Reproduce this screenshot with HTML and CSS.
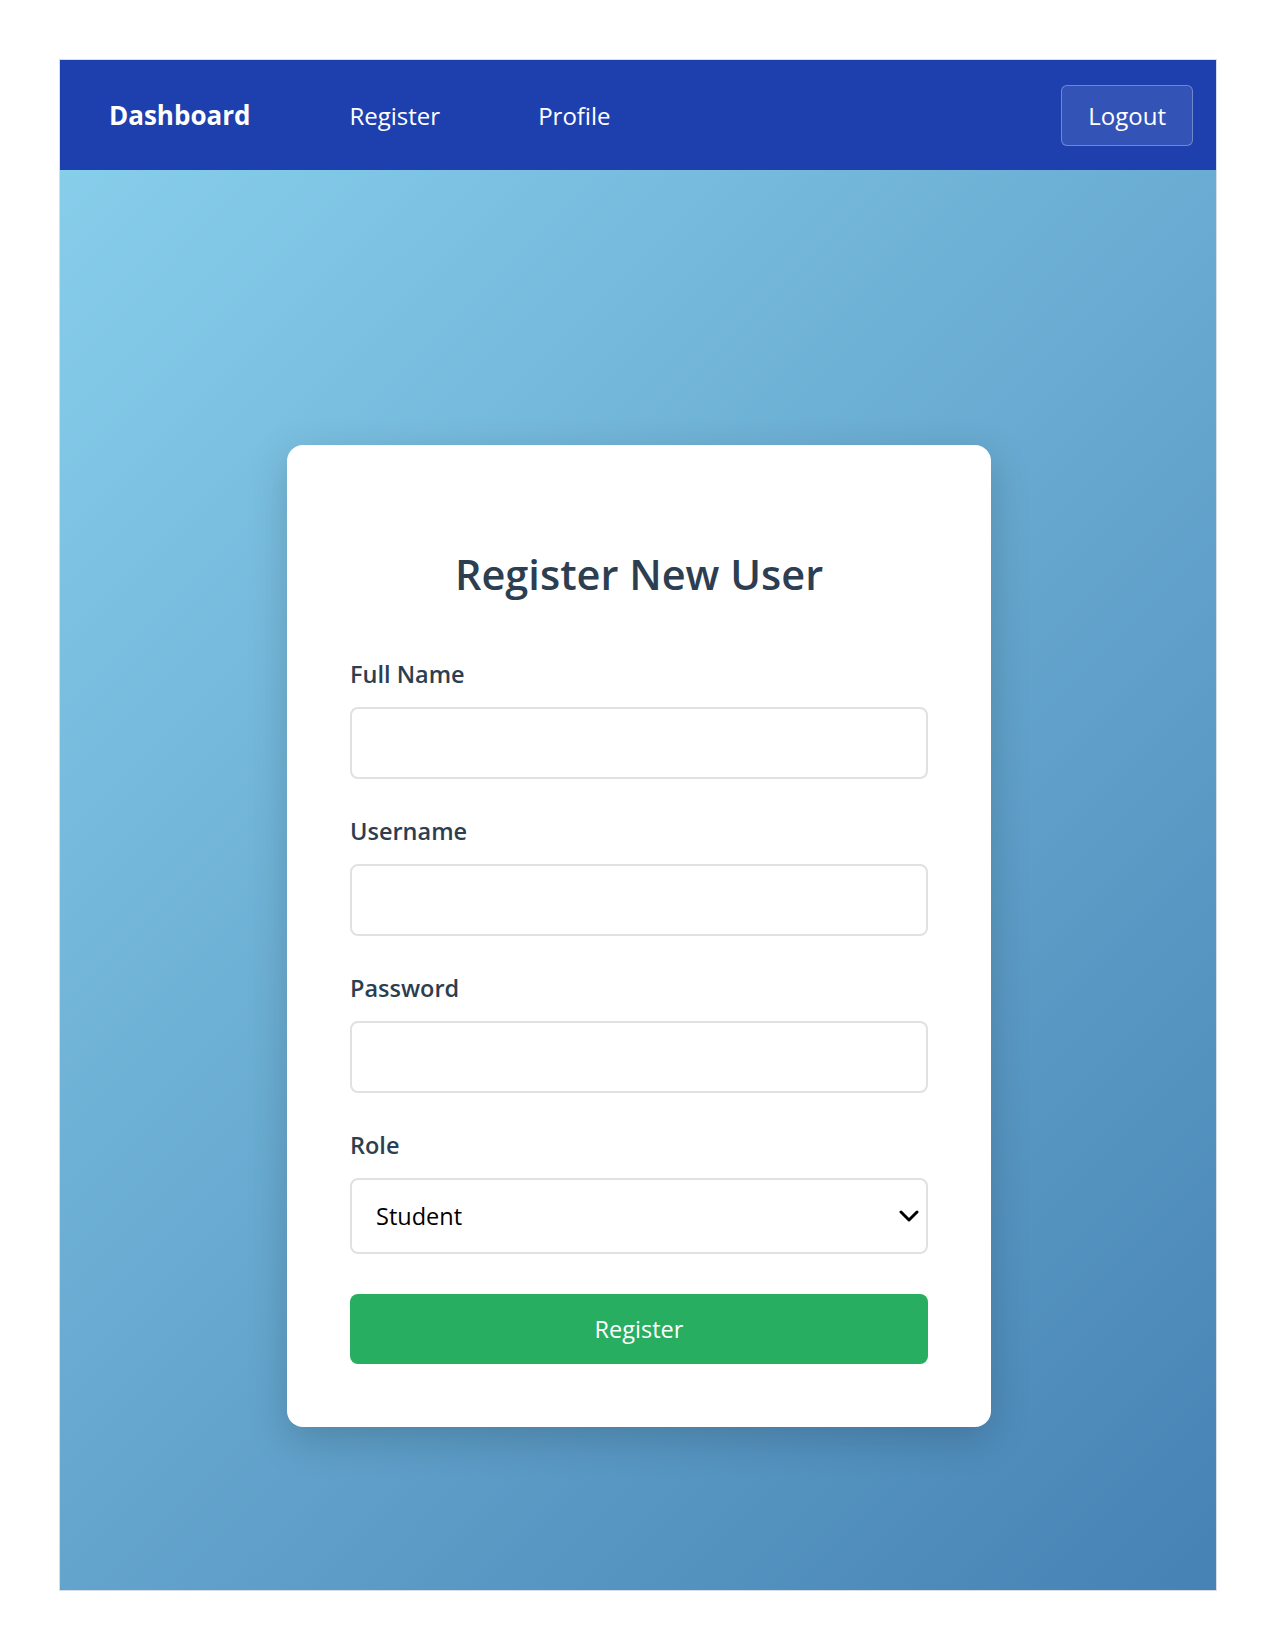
FILE: index.html
```html
<!DOCTYPE html>
<html lang="en">
<head>
<meta charset="utf-8">
<title>Register New User</title>
<link rel="stylesheet" href="styles.css">
</head>
<body>
<div class="frame">
  <nav class="navbar">
    <a class="brand" href="#">Dashboard</a>
    <div class="links">
      <a class="link" href="#">Register</a>
      <a class="link" href="#">Profile</a>
    </div>
    <button class="logout" type="button">Logout</button>
  </nav>
  <main class="main">
    <div class="card">
      <h2 class="title">Register New User</h2>
      <form class="form">
        <div class="group">
          <label class="label" for="fullname">Full Name</label>
          <input class="input" id="fullname" type="text">
        </div>
        <div class="group">
          <label class="label" for="username">Username</label>
          <input class="input" id="username" type="text">
        </div>
        <div class="group">
          <label class="label" for="password">Password</label>
          <input class="input" id="password" type="password">
        </div>
        <div class="group">
          <label class="label" for="role">Role</label>
          <div class="select-wrap">
            <select class="select" id="role">
              <option>Student</option>
              <option>Teacher</option>
              <option>Admin</option>
            </select>
            <svg class="chevron" width="20" height="12" viewBox="0 0 20 12" aria-hidden="true"><path d="M2 2 L10 10 L18 2" fill="none" stroke="#000" stroke-width="3" stroke-linecap="round" stroke-linejoin="round"/></svg>
          </div>
        </div>
        <button class="submit" type="button">Register</button>
      </form>
    </div>
  </main>
</div>
</body>
</html>
```

FILE: styles.css
```css
* { box-sizing: border-box; }

html, body {
  margin: 0;
  padding: 0;
  background: #ffffff;
}

body {
  padding: 59px 58px 59px 59px;
  font-family: "Open Sans", "Noto Sans", sans-serif;
}

.frame {
  height: calc(100vh - 118px);
  border: 1px solid #d6dde6;
  display: flex;
  flex-direction: column;
}

.navbar {
  height: 110px;
  flex: none;
  background: #1e40af;
  display: flex;
  align-items: center;
  padding: 0 23px 0 49px;
}

.brand {
  color: #ffffff;
  font-weight: 700;
  font-size: 26px;
  text-decoration: none;
  margin-right: 99px;
}

.links {
  display: flex;
  gap: 98px;
}

.link {
  color: #ffffff;
  font-size: 24px;
  text-decoration: none;
}

.logout {
  margin-left: auto;
  height: 61px;
  padding: 0 26px;
  font-family: inherit;
  font-size: 24px;
  color: #ffffff;
  background: rgba(255, 255, 255, 0.1);
  border: 1px solid rgba(255, 255, 255, 0.3);
  border-radius: 6px;
}

.main {
  flex: 1;
  background: linear-gradient(135deg, #87ceeb 0%, #4682b4 100%);
  padding-top: 275px;
}

.card {
  width: 704px;
  margin: 0 auto;
  position: relative;
  left: 1px;
  background: #ffffff;
  border-radius: 16px;
  padding: 63px;
  box-shadow: 0 12px 40px rgba(0, 0, 0, 0.18);
}

.title {
  margin: 42px 0 58px;
  text-align: center;
  font-size: 41.5px;
  line-height: 48px;
  font-weight: 600;
  color: #2c3e50;
}

.form {
  display: flex;
  flex-direction: column;
}

.group {
  display: flex;
  flex-direction: column;
  margin-bottom: 34px;
}

.label {
  font-size: 23.5px;
  line-height: 36px;
  font-weight: 600;
  color: #2c3e50;
  margin-bottom: 15px;
}

.input {
  height: 72px;
  border: 2px solid #e1e1e1;
  border-radius: 8px;
  padding: 0 24px;
  font-family: inherit;
  font-size: 23.5px;
  background: #ffffff;
}

.select-wrap {
  position: relative;
}

.select {
  width: 100%;
  height: 76px;
  border: 2px solid #e1e1e1;
  border-radius: 8px;
  padding: 0 24px;
  font-family: inherit;
  font-size: 23.5px;
  color: #000000;
  background: #ffffff;
  appearance: none;
  -webkit-appearance: none;
}

.chevron {
  position: absolute;
  right: 9px;
  top: 32px;
  pointer-events: none;
}

.submit {
  margin-top: 6px;
  height: 70px;
  border: none;
  border-radius: 8px;
  background: #27ae60;
  color: #ffffff;
  font-family: inherit;
  font-size: 23.5px;
}
```
